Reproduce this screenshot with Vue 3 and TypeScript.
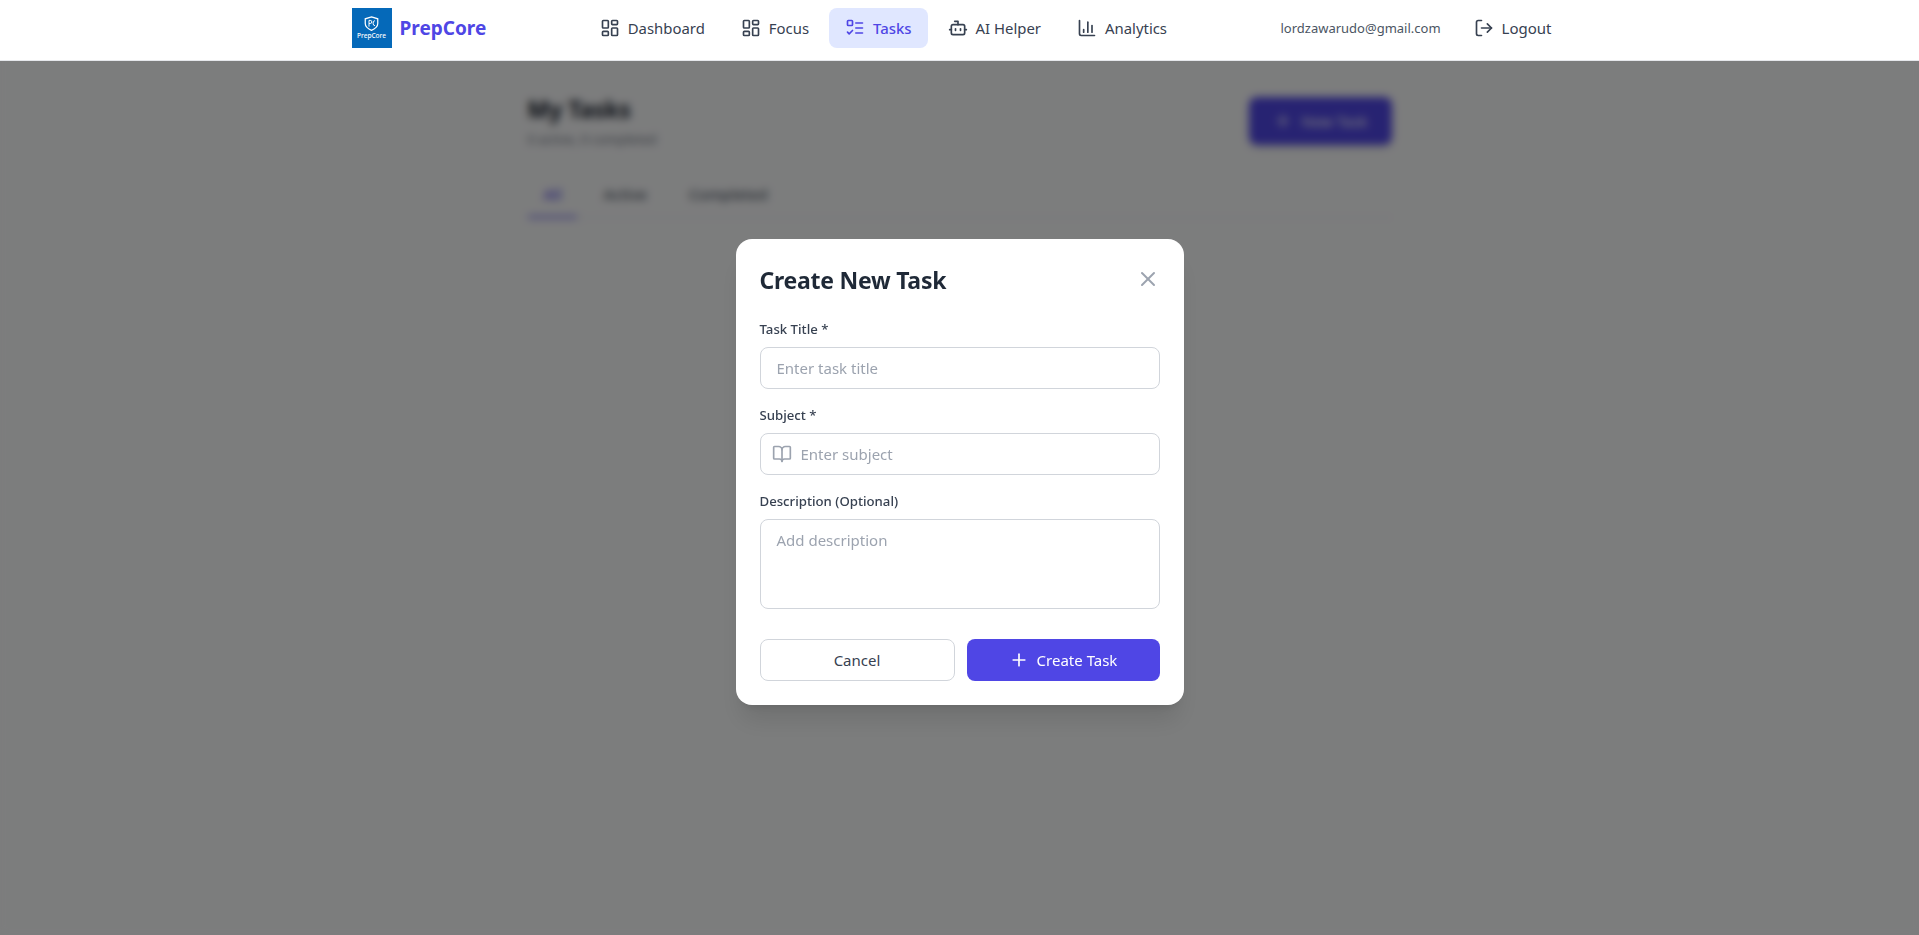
<template>
  <div class="page">
    <header class="topbar">
      <div class="topbar-inner">
        <div class="brand">
          <div class="logo">
            <svg class="logo-shield" viewBox="0 0 24 24" fill="none" stroke="#fff" stroke-width="2">
              <path d="M12 1.500 L22 4.500 V12 C22 17.500 17.500 20.500 12 23 C6.500 20.500 2 17.500 2 12 V4.500 Z" />
              <path d="M8 17 V7 h2 a2.500 2.500 0 0 1 0 5 H8" stroke-width="1.600" />
              <path d="M17.500 7.500 a3 4 0 0 0 -3 4 a3 4 0 0 0 3 4" stroke-width="1.600" />
            </svg>
            <span class="logo-text">PrepCore</span>
          </div>
          <span class="brand-name">PrepCore</span>
        </div>

        <nav class="nav">
          <a v-for="item in navItems" :key="item.label" class="nav-item" :class="{ active: item.label === 'Tasks' }">
            <svg class="icon" viewBox="0 0 24 24" fill="none" stroke="currentColor" stroke-width="2" stroke-linecap="round" stroke-linejoin="round">
              <path v-for="d in item.paths" :key="d" :d="d" />
            </svg>
            {{ item.label }}
          </a>
        </nav>

        <div class="account">
          <span class="email">lordzawarudo@gmail.com</span>
          <button class="logout">
            <svg class="icon" viewBox="0 0 24 24" fill="none" stroke="currentColor" stroke-width="2" stroke-linecap="round" stroke-linejoin="round">
              <path d="M9 21H5a2 2 0 0 1-2-2V5a2 2 0 0 1 2-2h4" />
              <path d="m16 17 5-5-5-5" />
              <path d="M21 12H9" />
            </svg>
            Logout
          </button>
        </div>
      </div>
    </header>

    <main class="content">
      <div class="content-head">
        <div>
          <h1>My Tasks</h1>
          <p>0 active, 0 completed</p>
        </div>
        <button class="new-task">
          <svg class="icon" viewBox="0 0 24 24" fill="none" stroke="currentColor" stroke-width="2" stroke-linecap="round">
            <path d="M5 12h14" />
            <path d="M12 5v14" />
          </svg>
          New Task
        </button>
      </div>
      <div class="tabs">
        <span v-for="tab in tabs" :key="tab" class="tab" :class="{ active: tab === 'All' }">{{ tab }}</span>
      </div>
    </main>

    <div class="backdrop">
      <form class="modal" @submit.prevent>
        <div class="modal-head">
          <h2>Create New Task</h2>
          <button type="button" class="close" aria-label="Close">
            <svg viewBox="0 0 24 24" fill="none" stroke="currentColor" stroke-width="2" stroke-linecap="round">
              <path d="M18 6 6 18" />
              <path d="m6 6 12 12" />
            </svg>
          </button>
        </div>

        <label class="field">
          <span>Task Title *</span>
          <input type="text" placeholder="Enter task title" />
        </label>

        <label class="field">
          <span>Subject *</span>
          <div class="with-icon">
            <svg viewBox="0 0 24 24" fill="none" stroke="currentColor" stroke-width="2" stroke-linecap="round" stroke-linejoin="round">
              <path d="M12 7v14" />
              <path d="M3 18a1 1 0 0 1-1-1V4a1 1 0 0 1 1-1h5a4 4 0 0 1 4 4 4 4 0 0 1 4-4h5a1 1 0 0 1 1 1v13a1 1 0 0 1-1 1h-6a3 3 0 0 0-3 3 3 3 0 0 0-3-3z" />
            </svg>
            <input type="text" placeholder="Enter subject" />
          </div>
        </label>

        <label class="field">
          <span>Description (Optional)</span>
          <textarea placeholder="Add description"></textarea>
        </label>

        <div class="actions">
          <button type="button" class="cancel">Cancel</button>
          <button type="submit" class="create">
            <svg class="icon" viewBox="0 0 24 24" fill="none" stroke="currentColor" stroke-width="2" stroke-linecap="round">
              <path d="M5 12h14" />
              <path d="M12 5v14" />
            </svg>
            Create Task
          </button>
        </div>
      </form>
    </div>
  </div>
</template>

<script setup lang="ts">
interface NavItem {
  label: string;
  paths: string[];
}

const dashboardIcon = [
  "M4 3h5a1 1 0 0 1 1 1v7a1 1 0 0 1-1 1H4a1 1 0 0 1-1-1V4a1 1 0 0 1 1-1z",
  "M15 3h5a1 1 0 0 1 1 1v3a1 1 0 0 1-1 1h-5a1 1 0 0 1-1-1V4a1 1 0 0 1 1-1z",
  "M15 12h5a1 1 0 0 1 1 1v7a1 1 0 0 1-1 1h-5a1 1 0 0 1-1-1v-7a1 1 0 0 1 1-1z",
  "M4 16h5a1 1 0 0 1 1 1v3a1 1 0 0 1-1 1H4a1 1 0 0 1-1-1v-3a1 1 0 0 1 1-1z",
];

const navItems: NavItem[] = [
  { label: "Dashboard", paths: dashboardIcon },
  { label: "Focus", paths: dashboardIcon },
  {
    label: "Tasks",
    paths: [
      "M4 3h4a1 1 0 0 1 1 1v4a1 1 0 0 1-1 1H4a1 1 0 0 1-1-1V4a1 1 0 0 1 1-1z",
      "m3 17 2 2 4-4",
      "M13 6h8",
      "M13 12h8",
      "M13 18h8",
    ],
  },
  {
    label: "AI Helper",
    paths: [
      "M12 8V4H8",
      "M6 8h12a2 2 0 0 1 2 2v8a2 2 0 0 1-2 2H6a2 2 0 0 1-2-2v-8a2 2 0 0 1 2-2z",
      "M2 14h2",
      "M20 14h2",
      "M15 13v2",
      "M9 13v2",
    ],
  },
  {
    label: "Analytics",
    paths: ["M3 3v16a2 2 0 0 0 2 2h16", "M18 17V9", "M13 17V5", "M8 17v-3"],
  },
];

const tabs = ["All", "Active", "Completed"];
</script>

<style>
html,
body {
  margin: 0;
  background: #f9fafb;
}
</style>

<style scoped>
.page {
  min-height: 935px;
  font-family: "Noto Sans", "Open Sans", sans-serif;
  color: #1f2937;
}

.icon {
  width: 20px;
  height: 20px;
  flex: none;
}

.topbar {
  position: relative;
  z-index: 20;
  height: 60px;
  background: #fff;
  border-bottom: 1px solid #e5e7eb;
}

.topbar-inner {
  box-sizing: border-box;
  max-width: 1280px;
  height: 100%;
  margin: 0 auto;
  padding: 0 32px 4px;
  display: flex;
  align-items: center;
  justify-content: space-between;
}

.brand {
  display: flex;
  align-items: center;
  gap: 8px;
}

.logo {
  width: 40px;
  height: 40px;
  background: #0569b9;
  display: flex;
  flex-direction: column;
  align-items: center;
  justify-content: center;
  gap: 1px;
}

.logo-shield {
  width: 15px;
  height: 15px;
}

.logo-text {
  font-size: 6.5px;
  font-weight: 500;
  line-height: 8px;
  color: #fff;
}

.brand-name {
  font-size: 19px;
  font-weight: 700;
  color: #4f46e5;
}

.nav {
  display: flex;
  gap: 4px;
}

.nav-item {
  height: 40px;
  padding: 0 16px;
  display: flex;
  align-items: center;
  gap: 8px;
  border-radius: 8px;
  font-size: 14.9px;
  color: #374151;
}

.nav-item.active {
  background: #e0e7ff;
  color: #4f46e5;
  font-weight: 500;
}

.account {
  display: flex;
  align-items: center;
  gap: 17px;
}

.email {
  font-size: 13px;
  color: #4b5563;
}

.logout {
  display: flex;
  align-items: center;
  gap: 8px;
  height: 40px;
  padding: 0 16px;
  border: 0;
  background: none;
  font: inherit;
  font-size: 15px;
  color: #374151;
}

.content {
  box-sizing: border-box;
  max-width: 896px;
  margin: 0 auto;
  padding: 32px 16px;
}

.content-head {
  display: flex;
  justify-content: space-between;
  align-items: center;
}

.content-head h1 {
  margin: 0;
  font-size: 23px;
  line-height: 32px;
  font-weight: 700;
  color: #111827;
}

.content-head p {
  margin: 4px 0 0;
  font-size: 13px;
  line-height: 20px;
  color: #6b7280;
}

.new-task {
  height: 48px;
  padding: 0 24px;
  display: flex;
  align-items: center;
  gap: 8px;
  border: 0;
  border-radius: 8px;
  background: #4f46e5;
  color: #fff;
  font: inherit;
  font-size: 15px;
  box-shadow: 0 4px 6px -1px rgba(0, 0, 0, 0.1);
}

.tabs {
  margin-top: 23px;
  display: flex;
  gap: 10px;
  border-bottom: 1px solid #e5e7eb;
}

.tab {
  padding: 12px 16px;
  font-size: 15px;
  line-height: 20px;
  font-weight: 500;
  color: #4b5563;
  margin-bottom: -1px;
}

.tab.active {
  color: #4f46e5;
  border-bottom: 2px solid #4f46e5;
}

.backdrop {
  position: fixed;
  inset: 0;
  z-index: 10;
  background: rgba(0, 0, 0, 0.5);
  backdrop-filter: blur(4px);
  display: flex;
  align-items: center;
  justify-content: center;
  padding-top: 9px;
  box-sizing: border-box;
}

.modal {
  box-sizing: border-box;
  width: 448px;
  padding: 24px;
  background: #fff;
  border-radius: 16px;
  box-shadow: 0 20px 25px -5px rgba(0, 0, 0, 0.1), 0 8px 10px -6px rgba(0, 0, 0, 0.1);
}

.modal-head {
  display: flex;
  align-items: center;
  justify-content: space-between;
  margin-bottom: 24px;
}

.modal-head h2 {
  margin: 0;
  padding-top: 2px;
  font-size: 23px;
  letter-spacing: -0.25px;
  line-height: 30px;
  font-weight: 700;
  color: #1f2937;
}

.close {
  width: 24px;
  height: 24px;
  padding: 0;
  border: 0;
  background: none;
  color: #9ca3af;
}

.close svg {
  display: block;
  width: 24px;
  height: 24px;
}

.field {
  display: block;
  margin-bottom: 16px;
}

.field > span {
  display: block;
  margin-bottom: 8px;
  font-size: 13.2px;
  line-height: 20px;
  font-weight: 500;
  color: #374151;
}

.field input,
.field textarea {
  box-sizing: border-box;
  display: block;
  width: 100%;
  padding: 8px 16px;
  border: 1px solid #d1d5db;
  border-radius: 8px;
  outline: none;
  background: #fff;
  font: inherit;
  font-size: 15px;
  line-height: 24px;
  color: #1f2937;
}

.field input {
  height: 42px;
}

.field textarea {
  height: 90px;
  resize: none;
}

.field input::placeholder,
.field textarea::placeholder {
  color: #9ca3af;
  opacity: 1;
}

.with-icon {
  position: relative;
}

.with-icon svg {
  position: absolute;
  left: 12px;
  top: 11px;
  width: 20px;
  height: 20px;
  color: #9ca3af;
}

.with-icon input {
  padding-left: 40px;
}

.actions {
  display: flex;
  gap: 12px;
  margin-top: 30px;
}

.actions button {
  flex: 1;
  height: 42px;
  border-radius: 8px;
  font: inherit;
  font-size: 15px;
  display: flex;
  align-items: center;
  justify-content: center;
  gap: 8px;
}

.cancel {
  border: 1px solid #d1d5db;
  background: #fff;
  color: #374151;
}

.create {
  border: 0;
  background: #4f46e5;
  color: #fff;
}
</style>
